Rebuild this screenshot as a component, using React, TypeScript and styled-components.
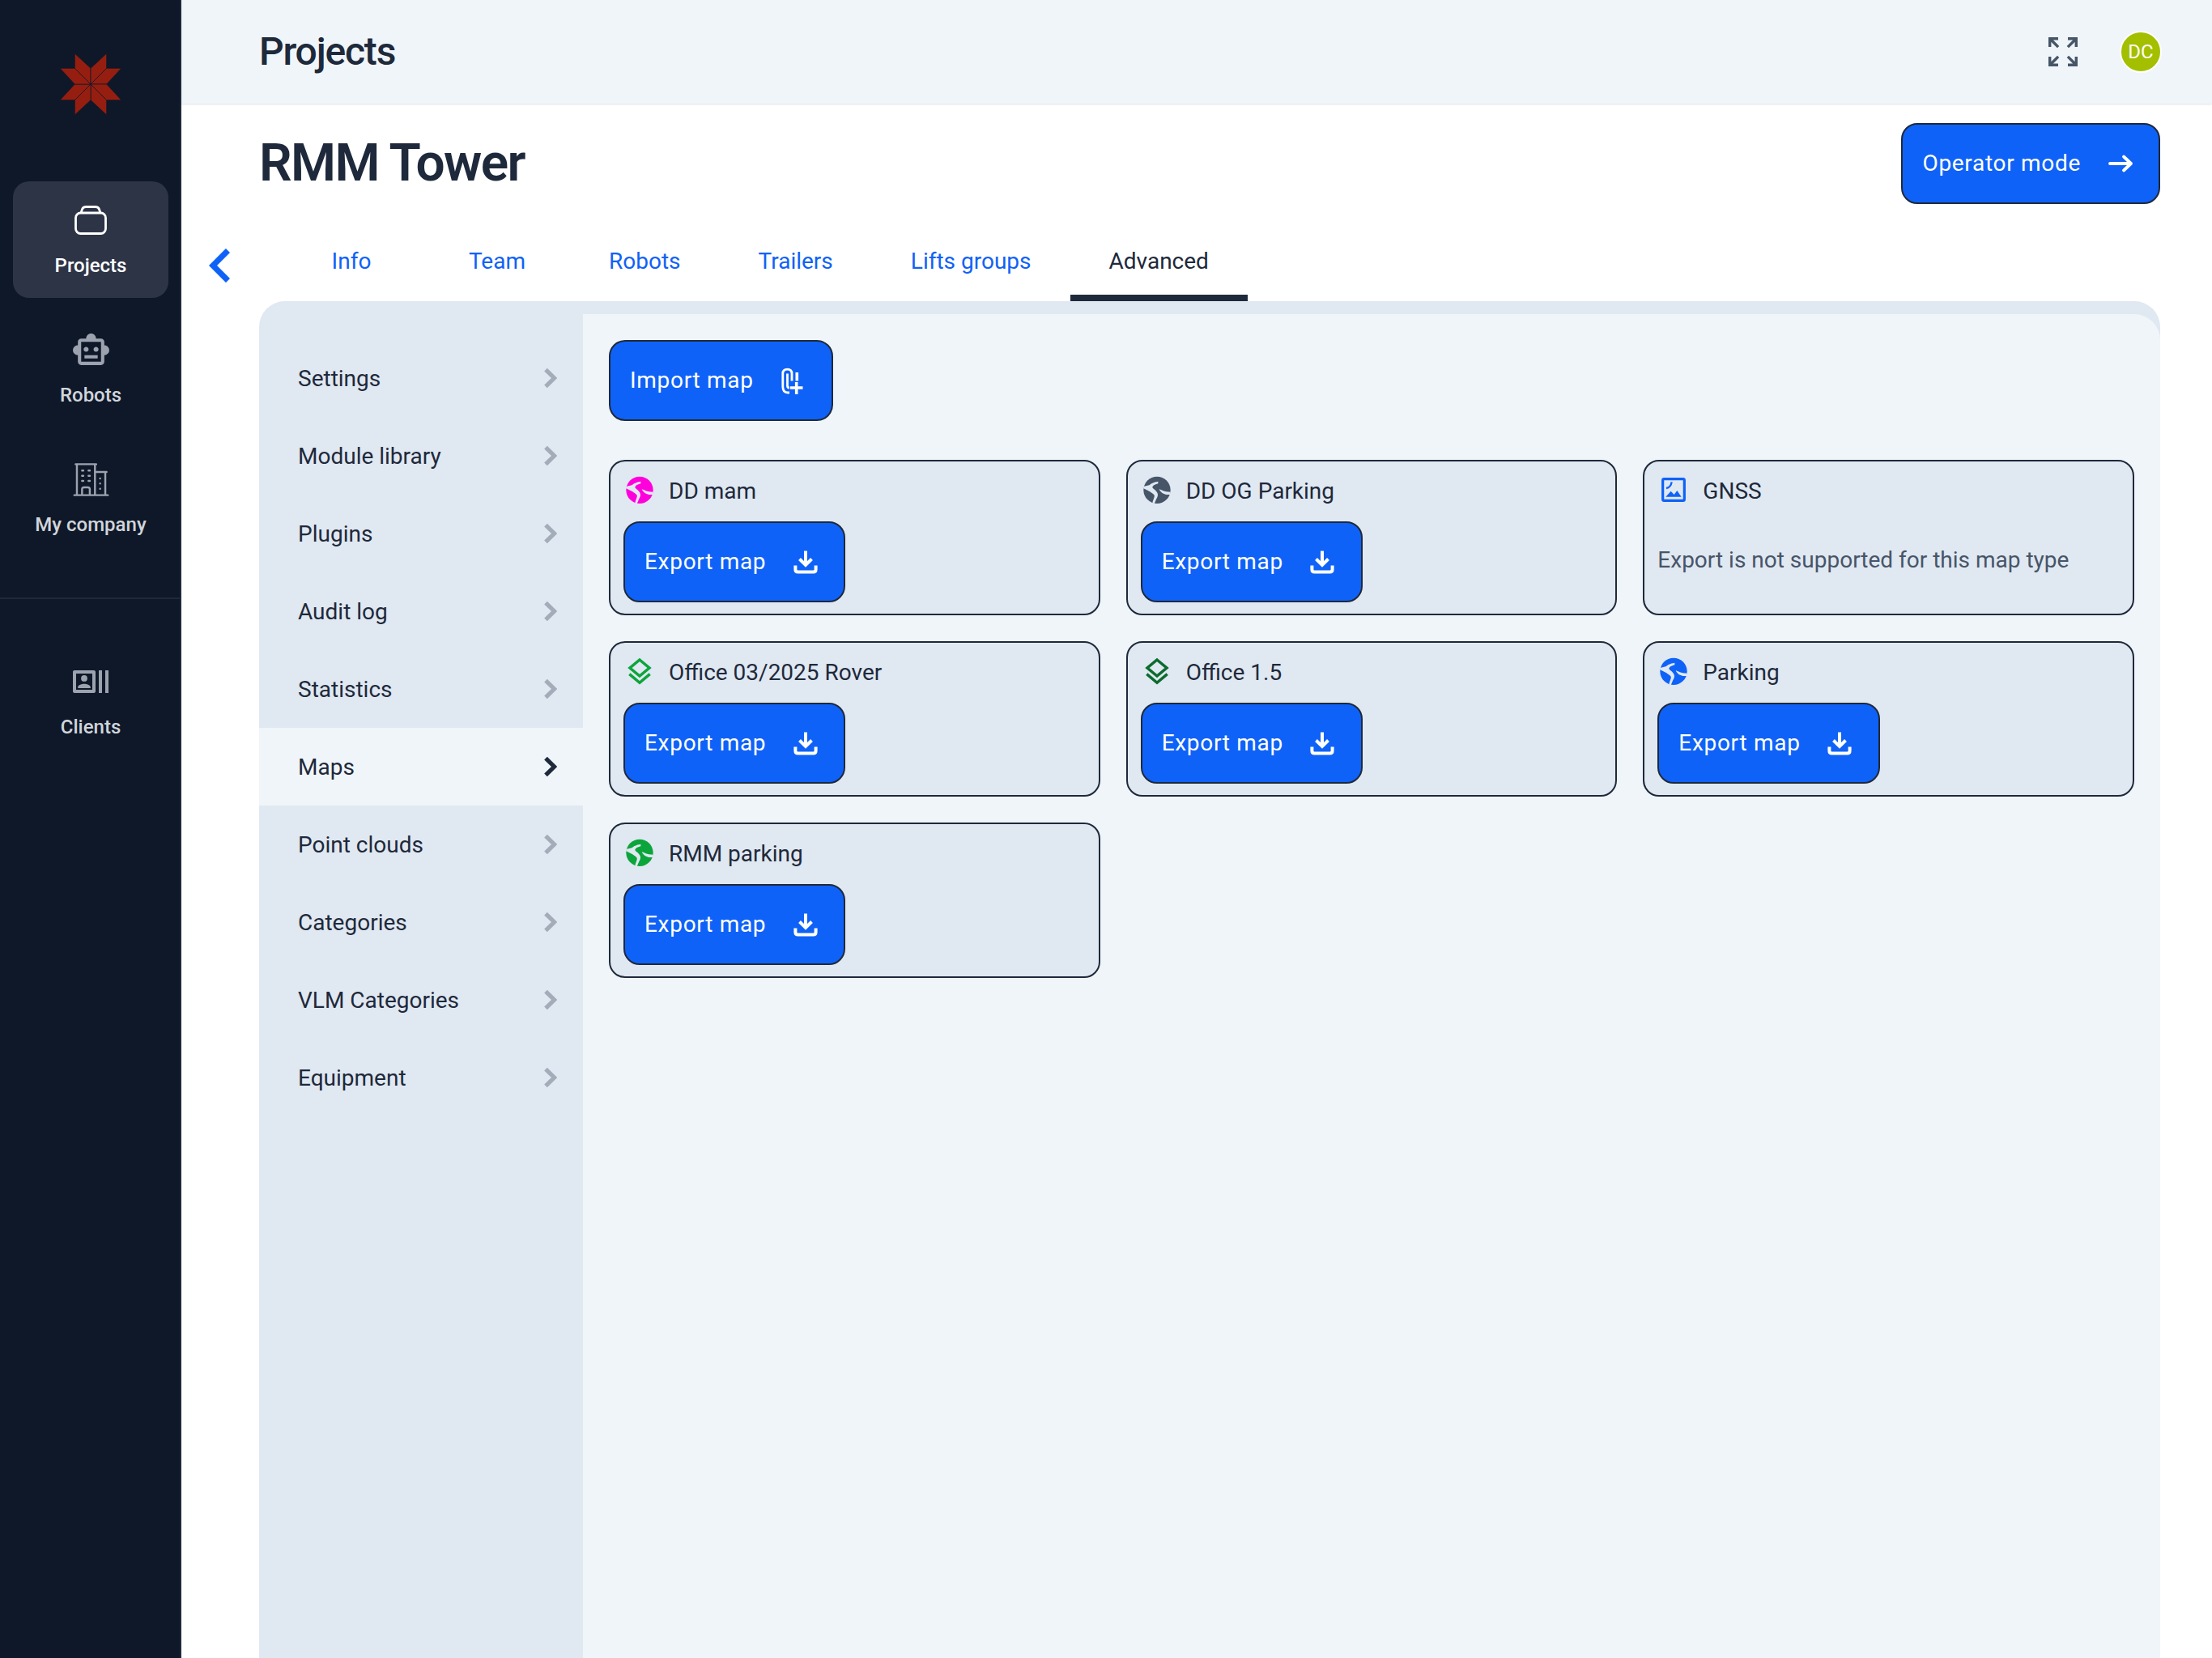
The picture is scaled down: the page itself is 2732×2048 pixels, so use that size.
import React from "react";
import styled, { createGlobalStyle } from "styled-components";
import { MdOutlineSmartToy, MdOutlineRecentActors } from "react-icons/md";
import { HiOutlineBuildingOffice2 } from "react-icons/hi2";

const Global = createGlobalStyle`
  html, body { margin: 0; padding: 0; background: #fff; }
  body { font-family: Roboto, "Liberation Sans", sans-serif; color: #1e293b; }
  * { box-sizing: border-box; }
`;

const BLUE = "#0f62f7";
const INK = "#1e293b";
const CARD = "#e0e8f1";
const SOFT = "#f0f5f9";

const Shell = styled.div`
  display: grid;
  grid-template-columns: 224px 1fr;
  width: 2732px;
  height: 2048px;
  overflow: hidden;
`;

const Sidebar = styled.aside`
  display: flex;
  flex-direction: column;
  background: #0e1829;
  border-right: 2px solid #1e293b;
  height: 100%;
`;

const LogoBox = styled.div`
  height: 208px;
  margin-bottom: 16px;
  display: flex;
  align-items: center;
  justify-content: center;
  padding-left: 1px;
`;

const SideNav = styled.nav`
  display: flex;
  flex-direction: column;
  gap: 16px;
`;

const SideItem = styled.a<{ $active?: boolean }>`
  display: flex;
  flex-direction: column;
  align-items: center;
  height: 144px;
  width: 192px;
  margin-left: 16px;
  padding-top: 28px;
  border-radius: 20px;
  background: ${(p) => (p.$active ? "#2d3446" : "transparent")};
  color: ${(p) => (p.$active ? "#ffffff" : "#9ca3af")};
`;

const SideIcon = styled.span`
  display: flex;
  align-items: center;
  justify-content: center;
  height: 40px;
`;

const SideLabel = styled.span<{ $active?: boolean }>`
  margin-top: 18px;
  font-size: 24px;
  line-height: 36px;
  font-weight: 500;
  color: ${(p) => (p.$active ? "#ffffff" : "#d1d5db")};
`;

const SideDivider = styled.hr`
  border: 0;
  height: 2px;
  width: 100%;
  background: #1e293b;
  margin: 50px 0 54px;
`;

const Main = styled.main`
  display: flex;
  flex-direction: column;
  min-width: 0;
  height: 2048px;
`;

const TopBar = styled.header`
  display: flex;
  align-items: center;
  justify-content: space-between;
  height: 128px;
  flex: none;
  padding: 0 64px 0 96px;
  background: ${SOFT};
  box-shadow: 0 1px 2px rgba(15, 23, 42, 0.12);
  position: relative;
  z-index: 1;
`;

const TopTitle = styled.h2`
  margin: 0;
  font-size: 48px;
  line-height: 56px;
  font-weight: 500;
  letter-spacing: -1.2px;
  color: ${INK};
`;

const TopActions = styled.div`
  display: flex;
  align-items: center;
  gap: 52px;
  margin-right: -2px;
`;

const Avatar = styled.div`
  width: 52px;
  height: 52px;
  border-radius: 50%;
  background: #a3bf00;
  border: 2px solid #fff;
  color: #fff;
  font-size: 24px;
  display: flex;
  align-items: center;
  justify-content: center;
`;

const TitleRow = styled.div`
  display: flex;
  align-items: center;
  justify-content: space-between;
  flex: none;
  padding: 24px 64px 20px 96px;
`;

const PageTitle = styled.h1`
  margin: 0;
  font-size: 64px;
  line-height: 72px;
  font-weight: 600;
  letter-spacing: -1.6px;
  color: ${INK};
`;

const Button = styled.button`
  display: inline-flex;
  align-items: center;
  height: 100px;
  padding: 0 24px 1px;
  background: ${BLUE};
  border: 2px solid ${INK};
  border-radius: 20px;
  color: #fff;
  font-family: inherit;
  font-size: 28px;
  font-weight: 400;
  letter-spacing: 0.7px;
  gap: 25px;
`;

const BtnIcon = styled.span`
  display: flex;
  width: 47px;
  height: 46px;
  align-items: center;
  justify-content: center;
`;

const TabRow = styled.div`
  display: flex;
  flex: none;
  height: 100px;
`;

const BackGutter = styled.div`
  width: 96px;
  display: flex;
  align-items: center;
  justify-content: center;
  padding-top: 12px;
  padding-right: 2px;
`;

const Tabs = styled.div`
  display: flex;
  margin-left: 24px;
`;

const Tab = styled.a<{ $active?: boolean }>`
  min-width: 180px;
  padding: 8px 48px 0;
  display: flex;
  align-items: center;
  justify-content: center;
  font-size: 28px;
  color: ${(p) => (p.$active ? INK : BLUE)};
  border-bottom: 8px solid ${(p) => (p.$active ? INK : "transparent")};
`;

const Panel = styled.section`
  flex: 1;
  display: grid;
  grid-template-columns: 400px 1fr;
  margin: 0 64px 0 96px;
  background: ${CARD};
  border-radius: 32px 32px 0 0;
  overflow: hidden;
  min-height: 0;
`;

const SideMenu = styled.nav`
  padding-top: 47px;
  display: flex;
  flex-direction: column;
`;

const MenuRow = styled.a<{ $active?: boolean }>`
  height: 96px;
  display: flex;
  align-items: center;
  justify-content: space-between;
  padding: 0 32px 0 48px;
  font-size: 28px;
  color: ${INK};
  background: ${(p) => (p.$active ? SOFT : "transparent")};
`;

const Content = styled.div`
  margin-top: 16px;
  padding: 32px;
  background: ${SOFT};
  border-radius: 0 32px 0 0;
`;

const CardGrid = styled.div`
  display: grid;
  grid-template-columns: repeat(3, 1fr);
  gap: 32px;
  margin-top: 48px;
`;

const Card = styled.article`
  height: 192px;
  padding: 16px 16px 14px;
  background: ${CARD};
  border: 2px solid ${INK};
  border-radius: 20px;
`;

const CardHeader = styled.div`
  display: flex;
  gap: 16px;
  height: 42px;
  margin-bottom: 16px;
  font-size: 28px;
  line-height: 42px;
  color: ${INK};
`;

const CardIcon = styled.span`
  display: flex;
  width: 40px;
  height: 38px;
`;

const Note = styled.p`
  margin: -3px 0 0;
  height: 100px;
  display: flex;
  align-items: center;
  font-size: 28px;
  color: #475569;
`;

const Logo = () => (
  <svg width="78" height="78" viewBox="-37 -37 74 74">
    {[0, 90, 180, 270].map((a) => (
      <g key={a} transform={`rotate(${a})`} fill="#961e10" stroke="#0e1829" strokeWidth="0.7">
        <path d="M0 0 V-18.7 L-18.7 -36 V-18.7 Z" />
        <path d="M0 0 V-18.7 L18.7 -36 V-18.7 Z" />
      </g>
    ))}
  </svg>
);

const ProjectsIcon = () => (
  <svg width="40" height="36" viewBox="0 0 40 36" fill="none" stroke="#fff" strokeWidth="2.8">
    <rect x="1.5" y="9" width="37" height="25.5" rx="6" />
    <path d="M8 9 L9.5 4.5 Q10.5 1.5 14 1.5 H26 Q29.5 1.5 30.5 4.5 L32 9" />
  </svg>
);

const ExpandIcon = () => (
  <svg width="36" height="36" viewBox="3 3 18 18" fill="none" stroke="#475569" strokeWidth="1.7" style={{ overflow: "visible" }}>
    <path d="M3.85 9V3.85H9 M3.85 3.85l5.2 5.2 M15 3.85h5.15V9 M20.15 3.85l-5.2 5.2 M3.85 15v5.15H9 M3.85 20.15l5.2-5.2 M15 20.15h5.15V15 M20.15 20.15l-5.2-5.2" />
  </svg>
);

const ArrowIcon = () => (
  <svg width="46" height="46" viewBox="0 0 46 46" fill="none" stroke="#fff" strokeWidth="3.8" strokeLinecap="round" strokeLinejoin="round">
    <path d="M10 23 H36 M27 14.5 L36 23 L27 31.5" />
  </svg>
);

const ImportIcon = () => (
  <svg width="46" height="46" viewBox="8 1.5 46 46" fill="none" stroke="#fff" strokeWidth="2.8">
    <path d="M30 25 V16 Q30 10.7 24.5 10.7 Q18.8 10.7 18.8 16 V32 Q18.8 39.5 25 39.5 H27" />
    <path d="M24.5 16 V31 Q24.5 33.5 27 33.5" />
    <path d="M28 33.5 H43.5 M35.7 26.5 V41.5 M36.3 14.5 V25" strokeWidth="3.6" />
  </svg>
);

const DownloadIcon = () => (
  <svg width="46" height="46" viewBox="0 0 46 46" fill="none" stroke="#fff" strokeWidth="4">
    <path d="M23 9.5 V27 M15.5 19.5 L23 27 L30.5 19.5" />
    <path d="M10.4 27.5 V32.5 Q10.4 35.6 13.5 35.6 H32.5 Q35.6 35.6 35.6 32.5 V27.5" />
  </svg>
);

const Chevron = ({ $color }: { $color: string }) => (
  <svg width="16" height="24" viewBox="0 0 16 24" fill="none" stroke={$color} strokeWidth="5.2">
    <path d="M2 1.6 L12.6 12 L2 22.4" />
  </svg>
);

const BackIcon = () => (
  <svg width="26" height="42" viewBox="0 0 26 42" fill="none" stroke={BLUE} strokeWidth="7.2">
    <path d="M23.5 2.5 L5 21 L23.5 39.5" />
  </svg>
);

const Globe = ({ color }: { color: string }) => (
  <svg width="40" height="38" viewBox="16 15 120 114">
    <circle cx="76" cy="73" r="50" fill={color} />
    <g fill={CARD}>
      <path d="M47 55 C54 49 62 44 80 41 L80 49 C67 52 59 57 59 64 C63 70 79 78 79 90 C79 100 71 108 67 123 L59 122 C61 108 68 100 66 92 C60 84 42 74 26 67 L26 60 Z" />
      <path d="M84 70 C92 72 102 80 126 80 L126 90 C106 92 92 86 84 70 Z" />
    </g>
  </svg>
);

const Layers = ({ color }: { color: string }) => (
  <svg width="40" height="38" viewBox="15 15 120 114" fill="none" stroke={color} strokeWidth="10.5">
    <path d="M75 30 L111 60 L75 90 L39 60 Z" />
    <path d="M37 83 L75 115 L113 83" />
  </svg>
);

const ImageIcon = () => (
  <svg width="40" height="38" viewBox="7 20 120 114" fill="none" stroke={BLUE}>
    <rect x="27" y="37" width="80" height="80" rx="5" strokeWidth="9.5" />
    <path d="M40 71 C52 69 58 60 60 48" strokeWidth="7" />
    <path d="M38 103 L57 82 L69 95 L80 80 L96 103 Z" fill={BLUE} stroke="none" />
  </svg>
);

const navMain = [
  { label: "Projects", icon: <ProjectsIcon />, active: true },
  { label: "Robots", icon: <MdOutlineSmartToy size={49} /> },
  { label: "My company", icon: <HiOutlineBuildingOffice2 size={51} strokeWidth={1.15} /> },
];

const tabs = ["Info", "Team", "Robots", "Trailers", "Lifts groups", "Advanced"];

const menu = [
  "Settings",
  "Module library",
  "Plugins",
  "Audit log",
  "Statistics",
  "Maps",
  "Point clouds",
  "Categories",
  "VLM Categories",
  "Equipment",
];

const maps: { name: string; icon: React.ReactNode; note?: string }[] = [
  { name: "DD mam", icon: <Globe color="#ff00dd" /> },
  { name: "DD OG Parking", icon: <Globe color="#475569" /> },
  { name: "GNSS", icon: <ImageIcon />, note: "Export is not supported for this map type" },
  { name: "Office 03/2025 Rover", icon: <Layers color="#0ca53c" /> },
  { name: "Office 1.5", icon: <Layers color="#0c6b2e" /> },
  { name: "Parking", icon: <Globe color={BLUE} /> },
  { name: "RMM parking", icon: <Globe color="#0ca53c" /> },
];

export default function App() {
  return (
    <>
      <Global />
      <Shell>
        <Sidebar>
          <LogoBox>
            <Logo />
          </LogoBox>
          <SideNav>
            {navMain.map((n) => (
              <SideItem key={n.label} $active={n.active}>
                <SideIcon>{n.icon}</SideIcon>
                <SideLabel $active={n.active}>{n.label}</SideLabel>
              </SideItem>
            ))}
          </SideNav>
          <SideDivider />
          <SideItem>
            <SideIcon>
              <MdOutlineRecentActors size={48} />
            </SideIcon>
            <SideLabel>Clients</SideLabel>
          </SideItem>
        </Sidebar>
        <Main>
          <TopBar>
            <TopTitle>Projects</TopTitle>
            <TopActions>
              <ExpandIcon />
              <Avatar>DC</Avatar>
            </TopActions>
          </TopBar>
          <TitleRow>
            <PageTitle>RMM Tower</PageTitle>
            <Button>
              Operator mode
              <BtnIcon>
                <ArrowIcon />
              </BtnIcon>
            </Button>
          </TitleRow>
          <TabRow>
            <BackGutter>
              <BackIcon />
            </BackGutter>
            <Tabs>
              {tabs.map((t) => (
                <Tab key={t} $active={t === "Advanced"}>
                  {t}
                </Tab>
              ))}
            </Tabs>
          </TabRow>
          <Panel>
            <SideMenu>
              {menu.map((m) => (
                <MenuRow key={m} $active={m === "Maps"}>
                  {m}
                  <Chevron $color={m === "Maps" ? "#1e293b" : "#a3acb9"} />
                </MenuRow>
              ))}
            </SideMenu>
            <Content>
              <Button>
                Import map
                <BtnIcon>
                  <ImportIcon />
                </BtnIcon>
              </Button>
              <CardGrid>
                {maps.map((c) => (
                  <Card key={c.name}>
                    <CardHeader>
                      <CardIcon>{c.icon}</CardIcon>
                      {c.name}
                    </CardHeader>
                    {c.note ? (
                      <Note>{c.note}</Note>
                    ) : (
                      <Button>
                        Export map
                        <BtnIcon>
                          <DownloadIcon />
                        </BtnIcon>
                      </Button>
                    )}
                  </Card>
                ))}
              </CardGrid>
            </Content>
          </Panel>
        </Main>
      </Shell>
    </>
  );
}
